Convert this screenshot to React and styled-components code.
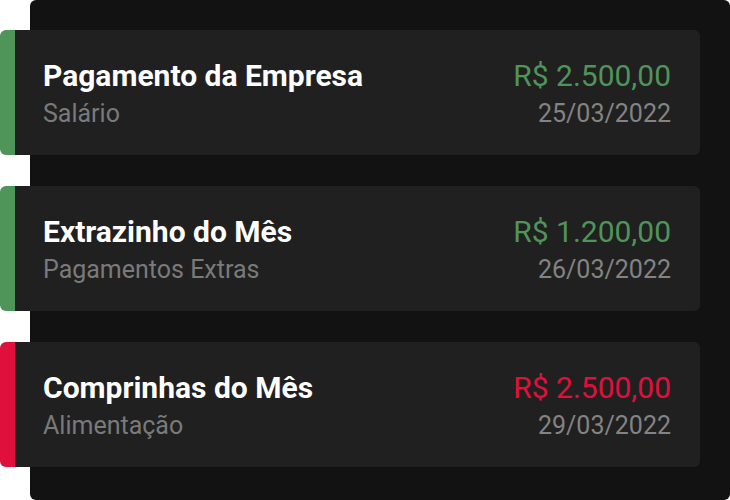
import React from 'react';
import styled, { createGlobalStyle } from 'styled-components';

const transactions = [
  { id: 1, title: 'Pagamento da Empresa', category: 'Salário', amount: 'R$ 2.500,00', date: '25/03/2022', type: 'income' },
  { id: 2, title: 'Extrazinho do Mês', category: 'Pagamentos Extras', amount: 'R$ 1.200,00', date: '26/03/2022', type: 'income' },
  { id: 3, title: 'Comprinhas do Mês', category: 'Alimentação', amount: 'R$ 2.500,00', date: '29/03/2022', type: 'outcome' },
];

function App() {
  return (
    <>
      <GlobalStyle />
      <Page>
        <Panel>
          {transactions.map(item => (
            <Card key={item.id} type={item.type}>
              <Info>
                <Title>{item.title}</Title>
                <Category>{item.category}</Category>
              </Info>
              <Values>
                <Amount type={item.type}>{item.amount}</Amount>
                <DateText>{item.date}</DateText>
              </Values>
            </Card>
          ))}
        </Panel>
      </Page>
    </>
  );
}

export default App;

const GlobalStyle = createGlobalStyle`
  body {
    margin: 0;
    background: #ffffff;
    font-family: Roboto, "Liberation Sans", sans-serif;
  }
`

const Page = styled.div`
  width: 730px;
  height: 500px;
  padding-left: 30px;
  box-sizing: border-box;
`

const Panel = styled.div`
  width: 700px;
  height: 500px;
  background: #121212;
  border-radius: 6px;
  padding-top: 30px;
  box-sizing: border-box;
  display: flex;
  flex-direction: column;
  gap: 31px;
`

const Card = styled.div`
  margin-left: -30px;
  width: 700px;
  height: 125px;
  box-sizing: border-box;
  background: #202020;
  border-radius: 6px;
  border-left: 15px solid ${p => (p.type === 'income' ? '#4f9459' : '#e0103c')};
  display: flex;
  justify-content: space-between;
  padding: 29px 29px 0 28px;
`

const Info = styled.div`
  display: flex;
  flex-direction: column;
  gap: 6px;
`

const Title = styled.div`
  color: #ffffff;
  font-size: 30px;
  font-weight: 700;
  line-height: 34px;
`

const Category = styled.div`
  color: #7a7a7a;
  font-size: 25px;
  line-height: 29px;
`

const Values = styled.div`
  display: flex;
  flex-direction: column;
  align-items: flex-end;
  gap: 6px;
`

const Amount = styled.div`
  color: ${p => (p.type === 'income' ? '#4f9459' : '#e0103c')};
  font-size: 30px;
  line-height: 34px;
`

const DateText = styled.div`
  color: #838383;
  font-size: 25px;
  line-height: 29px;
`
